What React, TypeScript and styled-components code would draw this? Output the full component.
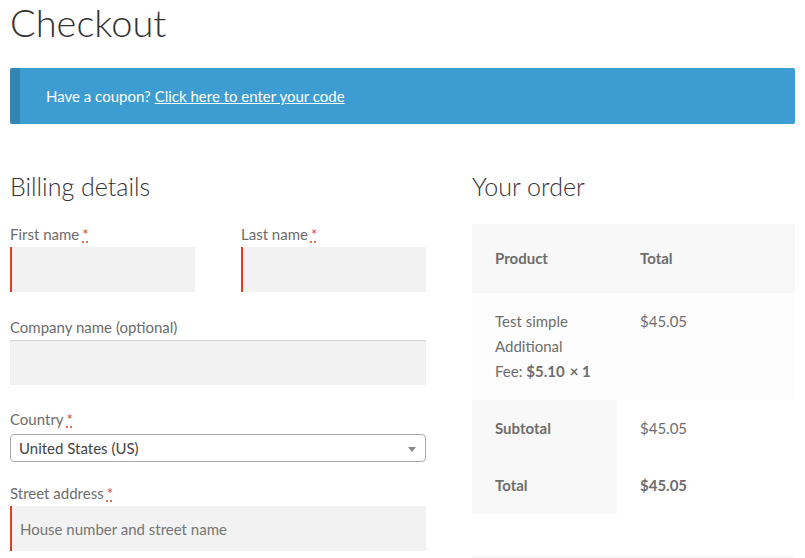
import React from "react";
import styled, { createGlobalStyle } from "styled-components";

const Global = createGlobalStyle`
  html, body { margin: 0; padding: 0; background: #ffffff; overflow: hidden; }
  body {
    font-family: Lato, "Open Sans", Arial, sans-serif;
    font-size: 15px;
    color: #6d6d6d;
  }
  * { box-sizing: border-box; }
`;

const Page = styled.div`
  width: 805px;
  height: 558px;
  overflow: hidden;
  padding: 0 10px;
`;

const Title = styled.h1`
  margin: 0 0 26px;
  font-size: 38px;
  line-height: 42px;
  height: 42px;
  font-weight: 300;
  color: #333333;
  padding-top: 1px;
`;

const Notice = styled.div`
  height: 56px;
  background: #3d9cd2;
  border-left: 10px solid rgba(0, 0, 0, 0.15);
  border-radius: 2px;
  padding: 0 26px;
  display: flex;
  align-items: center;
  color: #ffffff;
  font-size: 15px;
  line-height: 24px;
`;

const NoticeLink = styled.a`
  color: #ffffff;
  text-decoration: underline;
  margin-left: 4px;
`;

const Columns = styled.div`
  display: flex;
  justify-content: space-between;
  margin-top: 47px;
`;

const LeftCol = styled.div`
  width: 416px;
`;

const RightCol = styled.div`
  width: 323px;
`;

const SectionTitle = styled.h3<{ $gap: number }>`
  margin: 0 0 ${(p) => p.$gap}px;
  font-size: 25px;
  line-height: 31px;
  font-weight: 300;
  color: #333333;
`;

const Row = styled.div<{ $gap?: number }>`
  display: flex;
  gap: 46px;
  margin-bottom: ${(p) => (p.$gap ?? 22)}px;
`;

const Field = styled.div`
  flex: 1;
  display: flex;
  flex-direction: column;
`;

const Label = styled.label`
  display: block;
  line-height: 24px;
  height: 25px;
  font-size: 15px;
  color: #6d6d6d;
`;

const Req = styled.abbr`
  color: #e2401c;
  text-decoration: underline dotted;
  text-underline-offset: 2px;
  margin-left: 3px;
`;

const Input = styled.div<{ $required?: boolean }>`
  height: 45px;
  background: #f2f2f2;
  box-shadow: ${(p) =>
    p.$required ? "inset 2px 0 0 #e2401c" : "inset 0 1px 1px rgba(0,0,0,0.125)"};
  padding: 0 10px;
  display: flex;
  align-items: center;
  font-size: 15px;
  color: #757575;
`;

const Select = styled.div`
  height: 28px;
  margin-top: 2px;
  border: 1px solid #aaaaaa;
  border-radius: 4px;
  background: #ffffff;
  position: relative;
  display: flex;
  align-items: center;
  padding-left: 8px;
  color: #444444;
  font-size: 15px;
`;

const Arrow = styled.span`
  position: absolute;
  right: 9px;
  top: 12px;
  width: 0;
  height: 0;
  border-style: solid;
  border-width: 5px 4px 0 4px;
  border-color: #888888 transparent transparent transparent;
`;

const Table = styled.table`
  width: 100%;
  margin-top: 2px;
  border-collapse: collapse;
  border-spacing: 0;
  font-size: 15px;
  line-height: 25px;
  color: #6d6d6d;
`;

const Th = styled.th<{ $head?: boolean; $w?: number }>`
  text-align: left;
  vertical-align: top;
  font-weight: 700;
  background: #f8f8f8;
  padding: ${(p) => (p.$head ? "22px 23px" : "16px 23px")};
  width: ${(p) => (p.$w ? `${p.$w}px` : "auto")};
`;

const Td = styled.td<{ $bg?: string; $bold?: boolean }>`
  text-align: left;
  vertical-align: top;
  padding: 16px 23px;
  background: ${(p) => p.$bg ?? "transparent"};
  font-weight: ${(p) => (p.$bold ? 700 : 400)};
  white-space: nowrap;
`;

const Strong = styled.strong`
  font-weight: 700;
`;

const Qty = styled.strong`
  font-weight: 700;
  margin-left: 5px;
`;

const PaymentBox = styled.div`
  margin-top: 42px;
  height: 40px;
  background: #f8f8f8;
`;

export default function App() {
  return (
    <Page>
      <Global />
      <Title>Checkout</Title>
      <Notice>
        Have a coupon?<NoticeLink href="#">Click here to enter your code</NoticeLink>
      </Notice>
      <Columns>
        <LeftCol>
          <SectionTitle $gap={20}>Billing details</SectionTitle>
          <Row $gap={23}>
            <Field>
              <Label>
                First name<Req title="required">*</Req>
              </Label>
              <Input $required />
            </Field>
            <Field>
              <Label>
                Last name<Req title="required">*</Req>
              </Label>
              <Input $required />
            </Field>
          </Row>
          <Row>
            <Field>
              <Label>Company name (optional)</Label>
              <Input />
            </Field>
          </Row>
          <Row $gap={19}>
            <Field>
              <Label>
                Country<Req title="required">*</Req>
              </Label>
              <Select>
                United States (US)
                <Arrow />
              </Select>
            </Field>
          </Row>
          <Row>
            <Field>
              <Label>
                Street address<Req title="required">*</Req>
              </Label>
              <Input $required>House number and street name</Input>
            </Field>
          </Row>
        </LeftCol>
        <RightCol>
          <SectionTitle $gap={22}>Your order</SectionTitle>
          <Table>
            <thead>
              <tr>
                <Th $head $w={145}>Product</Th>
                <Th $head>Total</Th>
              </tr>
            </thead>
            <tbody>
              <tr>
                <Td $bg="#fdfdfd">
                  Test simple
                  <br />
                  Additional
                  <br />
                  Fee: <Strong>$5.10</Strong>
                  <Qty>×&nbsp;1</Qty>
                </Td>
                <Td $bg="#fdfdfd">$45.05</Td>
              </tr>
            </tbody>
            <tfoot>
              <tr>
                <Th>Subtotal</Th>
                <Td>$45.05</Td>
              </tr>
              <tr>
                <Th>Total</Th>
                <Td $bold>$45.05</Td>
              </tr>
            </tfoot>
          </Table>
          <PaymentBox />
        </RightCol>
      </Columns>
    </Page>
  );
}
